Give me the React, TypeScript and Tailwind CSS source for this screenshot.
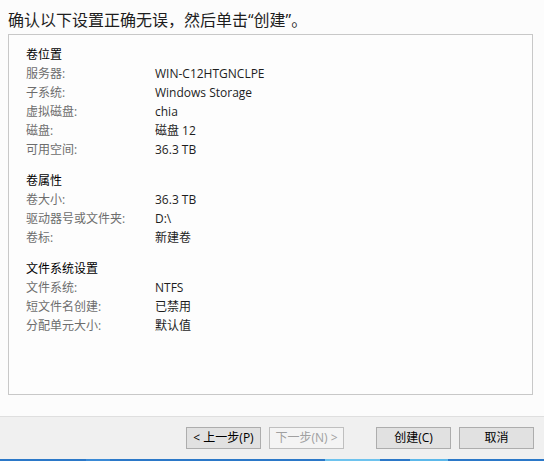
import { FunctionComponent } from "react";

type Row = { label: string; value: string };
type Section = { title: string; rows: Row[] };

const sections: Section[] = [
  {
    title: "卷位置",
    rows: [
      { label: "服务器:", value: "WIN-C12HTGNCLPE" },
      { label: "子系统:", value: "Windows Storage" },
      { label: "虚拟磁盘:", value: "chia" },
      { label: "磁盘:", value: "磁盘 12" },
      { label: "可用空间:", value: "36.3 TB" },
    ],
  },
  {
    title: "卷属性",
    rows: [
      { label: "卷大小:", value: "36.3 TB" },
      { label: "驱动器号或文件夹:", value: "D:\\" },
      { label: "卷标:", value: "新建卷" },
    ],
  },
  {
    title: "文件系统设置",
    rows: [
      { label: "文件系统:", value: "NTFS" },
      { label: "短文件名创建:", value: "已禁用" },
      { label: "分配单元大小:", value: "默认值" },
    ],
  },
];

const font = {
  fontFamily: '"Open Sans", "Noto Sans CJK SC", sans-serif',
};

const App: FunctionComponent = () => {
  return (
    <div
      className="w-[544px] h-[461px] bg-[#fcfcfc] flex flex-col text-[#1e1e1e] overflow-hidden"
      style={font}
    >
      <h1 className="h-[34px] px-2 pt-[8px] text-[16px] leading-[24px] font-normal text-[#1e1e1e]">
        确认以下设置正确无误，然后单击“创建”。
      </h1>

      <div className="mx-2 mr-[11px] h-[361px] border border-[#c8c8c8] bg-[#fdfdfd] pl-[17px] pt-[10px] flex flex-col gap-3">
        {sections.map((s) => (
          <div key={s.title} className="flex flex-col">
            <div className="h-[19px] text-[12px] leading-[19px] text-[#000]">
              {s.title}
            </div>
            {s.rows.map((r) => (
              <div key={r.label} className="flex h-[19px] text-[12px] leading-[19px]">
                <span className="w-[129px] text-[#6d6d6d]">{r.label}</span>
                <span className="text-[#1e1e1e]">{r.value}</span>
              </div>
            ))}
          </div>
        ))}
      </div>

      <div className="mt-[21px] flex-1 bg-[#f0f0f0] border-t border-[#dfdfdf] flex flex-col">
        <div className="flex justify-end items-start pt-[10px] pr-[10px]">
          <button className="w-[75px] h-[22px] border border-[#adadad] bg-[#e1e1e1] text-[12px] text-[#000]">
            &lt; 上一步(P)
          </button>
          <button className="ml-2 w-[75px] h-[22px] border border-[#bfbfbf] bg-[#f4f4f4] text-[12px] text-[#a0a0a0]">
            下一步(N) &gt;
          </button>
          <button className="ml-8 w-[75px] h-[22px] border border-[#adadad] bg-[#e1e1e1] text-[12px] text-[#000]">
            创建(C)
          </button>
          <button className="ml-2 w-[75px] h-[22px] border border-[#adadad] bg-[#e1e1e1] text-[12px] text-[#000]">
            取消
          </button>
        </div>
        <div className="mt-auto h-[2px] flex">
          <div className="w-[86px] bg-[#2b78c8]" />
          <div className="w-[24px] bg-[#3a8ad6]" />
          <div className="w-[215px] bg-[#2b78c8]" />
          <div className="w-[55px] bg-[#6ec3ee]" />
          <div className="w-[30px] bg-[#2b78c8]" />
          <div className="w-[38px] bg-[#5cb8ea]" />
          <div className="flex-1 bg-[#2b78c8]" />
        </div>
      </div>
    </div>
  );
};

export default App;
